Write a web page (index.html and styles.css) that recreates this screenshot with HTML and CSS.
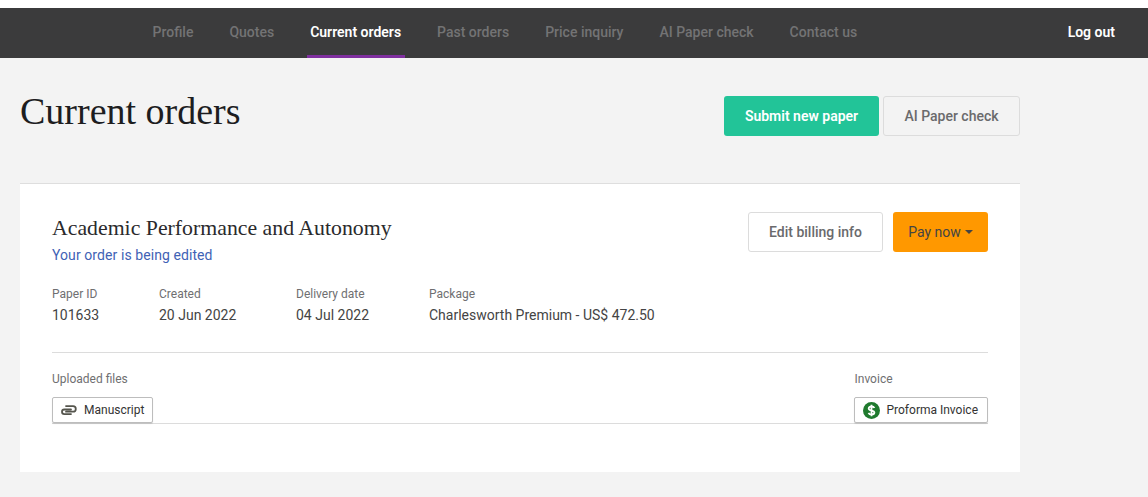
FILE: index.html
```html
<!DOCTYPE html>
<html lang="en">
<head>
<meta charset="utf-8">
<title>Current orders</title>
<link rel="stylesheet" href="styles.css">
</head>
<body>
<nav class="topbar">
  <ul class="nav-links">
    <li><a href="#">Profile</a></li>
    <li><a href="#">Quotes</a></li>
    <li><a href="#" class="active">Current orders</a></li>
    <li><a href="#">Past orders</a></li>
    <li><a href="#">Price inquiry</a></li>
    <li><a href="#">AI Paper check</a></li>
    <li><a href="#">Contact us</a></li>
  </ul>
  <a href="#" class="logout">Log out</a>
</nav>
<main class="content">
  <header class="page-head">
    <h1>Current orders</h1>
    <div class="head-actions">
      <a href="#" class="btn btn-green">Submit new paper</a>
      <a href="#" class="btn btn-ghost">AI Paper check</a>
    </div>
  </header>
  <section class="card">
    <div class="card-top">
      <div>
        <h2>Academic Performance and Autonomy</h2>
        <p class="status">Your order is being edited</p>
      </div>
      <div class="card-actions">
        <a href="#" class="btn btn-white">Edit billing info</a>
        <a href="#" class="btn btn-orange">Pay now<span class="caret"></span></a>
      </div>
    </div>
    <dl class="meta">
      <div class="meta-id"><dt>Paper ID</dt><dd>101633</dd></div>
      <div class="meta-created"><dt>Created</dt><dd>20 Jun 2022</dd></div>
      <div class="meta-delivery"><dt>Delivery date</dt><dd>04 Jul 2022</dd></div>
      <div><dt>Package</dt><dd>Charlesworth Premium - US$ 472.50</dd></div>
    </dl>
    <div class="files">
      <div>
        <div class="files-label">Uploaded files</div>
        <a href="#" class="chip">
          <svg class="clip" viewBox="0 0 17 10" width="17" height="10" aria-hidden="true"><path d="M11 4.500H4.300a2.300 2.300 0 0 0 0 4.600H11M6 1.100H13a2.800 2.800 0 0 1 0 5.600H6" fill="none" stroke="#55554d" stroke-width="1.800" stroke-linecap="round"/></svg>
          Manuscript
        </a>
      </div>
      <div>
        <div class="files-label files-label-invoice">Invoice</div>
        <a href="#" class="chip chip-invoice">
          <svg class="dollar" viewBox="0 0 17 17" width="17" height="17" aria-hidden="true"><circle cx="8.500" cy="8.500" r="8.500" fill="#1f7a2e"/><path d="M11.400 6C10.900 4.900 9.800 4.500 8.500 4.500c-1.600 0-2.800.8-2.800 2 0 2.800 5.700 1.300 5.700 4 0 1.300-1.300 2-2.900 2-1.400 0-2.500-.6-3-1.700M8.500 2.800v11.400" fill="none" stroke="#fff" stroke-width="1.800"/></svg>
          Proforma Invoice
        </a>
      </div>
    </div>
  </section>
</main>
</body>
</html>
```
FILE: styles.css
```css
* { box-sizing: border-box; }
html, body { margin: 0; padding: 0; }
body {
  background: #f3f3f3;
  font-family: Roboto, "Liberation Sans", sans-serif;
  color: #444;
  padding-top: 8px;
  height: 497px;
  overflow: hidden;
  position: relative;
}
body::before {
  content: "";
  position: absolute;
  top: 0; left: 0; right: 0;
  height: 8px;
  background: #fff;
}
a { text-decoration: none; }

.topbar {
  height: 50px;
  background: #3b3b3c;
  display: flex;
  justify-content: space-between;
  padding: 0 33px 0 152.500px;
}
.nav-links {
  list-style: none;
  margin: 0;
  padding: 0;
  display: flex;
  gap: 36px;
}
.nav-links a {
  display: block;
  height: 50px;
  line-height: 48px;
  font-size: 14px;
  font-weight: 500;
  color: #737374;
}
.nav-links a.active {
  color: #fff;
  font-weight: 600;
  padding: 0 3.500px;
  margin: 0 -3.500px;
  border-bottom: 3px solid #7f2f9f;
}
.logout {
  color: #fff;
  font-size: 14px;
  font-weight: 600;
  line-height: 48px;
}

.content { margin-left: 20px; width: 1000px; }
.page-head {
  display: flex;
  justify-content: space-between;
  height: 125px;
  padding-top: 38px;
}
h1 {
  margin: 0;
  font-family: "Liberation Serif", serif;
  font-weight: 400;
  font-size: 38px;
  line-height: 30px;
  color: #1d1d1f;
}
.head-actions { display: flex; gap: 4px; }
.btn {
  display: flex;
  align-items: center;
  justify-content: center;
  height: 40px;
  border-radius: 3px;
  font-size: 14px;
  font-weight: 500;
}
.btn-green { width: 155px; background: #22c498; color: #fff; font-weight: 600; }
.btn-ghost { width: 137px; background: #f3f3f3; color: #6a6a6c; border: 1px solid #dcdcdc; }

.card {
  background: #fff;
  border-top: 1px solid #dedede;
  height: 289px;
  padding: 28px 32px 0;
}
.card-top { display: flex; justify-content: space-between; height: 69px; }
h2 {
  margin: 0;
  font-family: "Liberation Serif", serif;
  font-weight: 400;
  font-size: 21.800px;
  line-height: 33px;
  color: #2a2a2c;
}
.status {
  margin: 0;
  font-size: 14px;
  line-height: 20px;
  letter-spacing: .08px;
  color: #3f62b5;
}
.card-actions { display: flex; gap: 10px; }
.btn-white { width: 135px; background: #fff; color: #6a6a6c; border: 1px solid #dcdcdc; }
.btn-orange { width: 95px; background: #ff9800; color: #444; font-weight: 400; }
.caret {
  width: 0; height: 0;
  margin-left: 4px;
  border-left: 4px solid transparent;
  border-right: 4px solid transparent;
  border-top: 4px solid #444;
}

.meta {
  display: flex;
  margin: 0;
  height: 72px;
  border-bottom: 1px solid #dcdcdc;
}
.meta-id { width: 107px; }
.meta-created { width: 137px; }
.meta-delivery { width: 133px; }
.meta dt {
  font-size: 12px;
  line-height: 16px;
  font-weight: 400;
  color: #6f6f71;
  margin-top: 5px;
}
.meta dd {
  margin: 5px 0 0;
  font-size: 14px;
  line-height: 16px;
  color: #444;
}

.files {
  display: flex;
  justify-content: space-between;
  height: 71px;
  padding-top: 18px;
  border-bottom: 1px solid #dcdcdc;
}
.files-label {
  font-size: 12px;
  line-height: 16px;
  color: #6f6f71;
  margin-bottom: 10px;
}
.files-label-invoice { margin-left: 1px; }
.chip {
  display: flex;
  align-items: center;
  gap: 7px;
  height: 26px;
  padding: 0 8px 0 7px;
  background: #fff;
  border: 1px solid #bdbdbd;
  border-radius: 2px;
  box-shadow: 0 1px 1px rgba(0,0,0,.12);
  font-size: 12px;
  color: #333;
}
.chip-invoice { padding-right: 9px; }
.dollar { margin-left: 1px; margin-right: 0; }
```
